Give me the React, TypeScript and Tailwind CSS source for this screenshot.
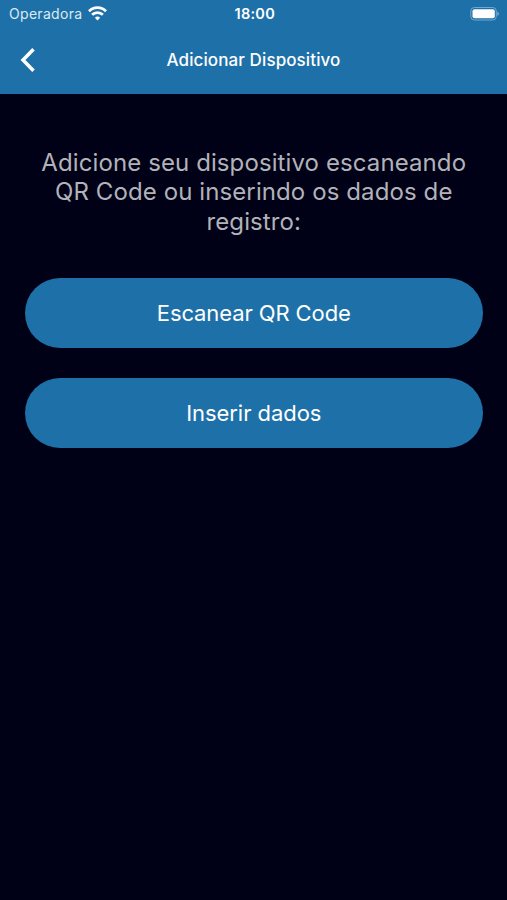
export default function App() {
  return (
    <main className="flex h-[900px] w-full flex-col bg-[#000116] font-['Inter',sans-serif] text-white">
      <header className="h-[94px] bg-[#1e71a8]">
        <div className="grid h-[27px] grid-cols-3 items-center pr-[6.5px] pl-[9px]">
          <div className="flex items-center gap-[5.5px] text-[14px] text-[#dceaf3]">
            <span className="tracking-[0.3px]">Operadora</span>
            <svg width="19" height="15" viewBox="0 0 19 15" fill="none" stroke="white" strokeWidth="2.7">
              <path d="M1 5.2a12 12 0 0 1 17 0" />
              <path d="M4.1 8.8a7.7 7.7 0 0 1 10.8 0" />
              <path d="M6.9 11.7a3.8 3.8 0 0 1 5.2 0l-2.6 2.7Z" fill="white" stroke="none" />
            </svg>
          </div>
          <span className="text-center text-[14.5px] font-semibold tracking-[0.25px]">18:00</span>
          <svg className="justify-self-end" width="30" height="14" viewBox="0 0 30 14">
            <rect x=".8" y=".5" width="25.5" height="12.5" rx="3.5" fill="none" stroke="#72a8cd" />
            <rect x="2.5" y="2.2" width="22.3" height="9.1" rx="2" fill="white" />
            <path d="M27.3 4.5c2.2.8 2.2 3.7 0 4.5Z" fill="#72a8cd" />
          </svg>
        </div>
        <div className="grid h-[65px] grid-cols-[60px_1fr_60px] items-center">
          <button aria-label="Voltar" className="pl-5">
            <svg width="16" height="26" viewBox="0 0 16 26" fill="none" stroke="white" strokeWidth="3.5">
              <path d="M13.5 2.2 3 13l10.5 10.8" />
            </svg>
          </button>
          <h1 className="pt-0.5 text-center text-[17px] font-medium tracking-[0.1px]">Adicionar Dispositivo</h1>
        </div>
      </header>
      <section className="flex flex-col pt-[54px] pr-[24.5px] pl-[25px]">
        <p className="text-center text-[24px] leading-[29.3px] tracking-[0.1px] text-[#b2b2b9]">
          Adicione seu dispositivo escaneando<br />QR Code ou inserindo os dados de<br />registro:
        </p>
        <button className="mt-[42.4px] h-[70px] rounded-full bg-[#1e71a8] pt-px text-[22px] tracking-[-0.1px]">Escanear QR Code</button>
        <button className="mt-[30px] h-[70px] rounded-full bg-[#1e71a8] pt-px text-[22px] tracking-[-0.05px]">Inserir dados</button>
      </section>
    </main>
  );
}
